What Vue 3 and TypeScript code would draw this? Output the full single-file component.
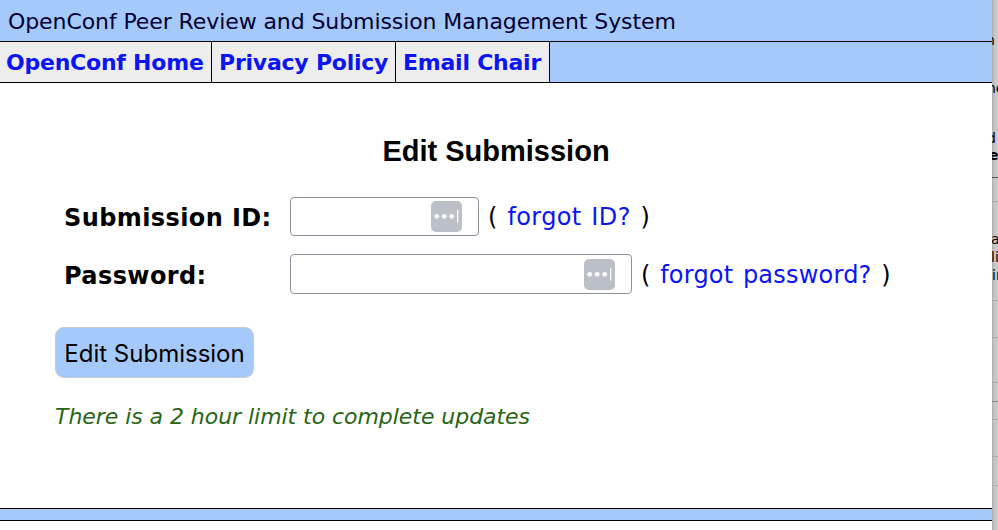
<script setup lang="ts">
interface Field {
  id: string
  label: string
  type: string
  link: string
  size: string
}

const navItems: string[] = ['OpenConf Home', 'Privacy Policy', 'Email Chair']

const fields: Field[] = [
  { id: 'pid', label: 'Submission ID:', type: 'text', link: 'forgot ID?', size: 'short' },
  { id: 'pwd', label: 'Password:', type: 'password', link: 'forgot password?', size: 'long' },
]

const edgeTexts = [
  { text: 'n', top: 31, left: -6, bold: false },
  { text: 'ne', top: 79, left: -5, bold: false },
  { text: 'd', top: 129, left: -5, bold: false },
  { text: 'e', top: 146, left: -3, bold: true },
  { text: 'a', top: 230, left: -1, bold: false },
  { text: 'li', top: 248, left: -1, bold: false },
  { text: 'in', top: 266, left: 0, bold: false },
]

const edgeLines = [
  { top: 177, color: '#555' },
  { top: 201, color: '#aaa' },
  { top: 300, color: '#aaa' },
  { top: 337, color: '#aaa' },
  { top: 382, color: '#aaa' },
  { top: 401, color: '#888' },
  { top: 419, color: '#aaa' },
  { top: 456, color: '#aaa' },
  { top: 485, color: '#aaa' },
]
</script>

<template>
  <div class="screen">
    <div class="window">
      <header class="banner"><span>OpenConf Peer Review and Submission Management System</span></header>
      <nav class="menu">
        <a v-for="(item, i) in navItems" :key="item" href="#" :class="'item' + i"><span>{{ item }}</span></a>
      </nav>
      <main class="content">
        <h1>Edit Submission</h1>
        <form @submit.prevent>
          <div v-for="f in fields" :key="f.id" class="row" :class="f.size">
            <label :for="f.id">{{ f.label }}</label>
            <div class="box">
              <input :id="f.id" :type="f.type" />
              <svg class="key" width="31" height="31" viewBox="0 0 31 31">
                <rect width="31" height="31" rx="5" fill="#babfc8" />
                <g fill="#fff">
                  <circle cx="5.7" cy="15.3" r="2.4" />
                  <circle cx="13.2" cy="15.3" r="2.4" />
                  <circle cx="20.7" cy="15.3" r="2.4" />
                  <rect x="26" y="9" width="1.3" height="12.5" />
                </g>
              </svg>
            </div>
            <span class="hint">( <a href="#">{{ f.link }}</a> )</span>
          </div>
          <button type="submit">Edit Submission</button>
          <p class="note">There is a 2 hour limit to complete updates</p>
        </form>
      </main>
      <footer class="foot"></footer>
    </div>
    <aside class="behind">
      <span
        v-for="t in edgeTexts"
        :key="t.top"
        :class="{ bold: t.bold }"
        :style="{ top: t.top + 'px', left: t.left + 'px' }"
      >{{ t.text }}</span>
      <i v-for="l in edgeLines" :key="l.top" :style="{ top: l.top + 'px', background: l.color }"></i>
    </aside>
  </div>
</template>

<style>
body {
  margin: 0;
  overflow: hidden;
}
</style>

<style scoped>
.screen {
  display: flex;
  width: 998px;
  height: 530px;
  overflow: hidden;
  font-family: Verdana, "DejaVu Sans", sans-serif;
  color: #000;
  white-space: nowrap;
}
.window {
  display: flex;
  flex-direction: column;
  width: 992px;
  background: #fff;
}
a {
  color: #0a14f5;
  text-decoration: none;
}
.banner {
  box-sizing: border-box;
  height: 42px;
  padding-left: 8px;
  border-bottom: 1px solid #000;
  background: #a5c9fa;
  color: #000033;
  font-size: 22px;
  letter-spacing: -0.09px;
  line-height: 43px;
}
.menu {
  display: flex;
  box-sizing: border-box;
  height: 41px;
  border-bottom: 1px solid #000;
  background: #a5c9fa;
  font-size: 22px;
  font-weight: bold;
  letter-spacing: -0.23px;
  line-height: 41px;
}
.menu a {
  box-sizing: border-box;
  height: 40px;
  padding-left: 7px;
  border-right: 1px solid #000;
  background: #ededed;
}
.menu .item0 {
  width: 212px;
  padding-left: 6px;
}
.item1 {
  width: 184px;
}
.item2 {
  width: 154px;
}
.content {
  flex: 1;
}
h1 {
  margin: 50px 0 27px;
  font: bold 29px/37px "Liberation Sans", Arial, sans-serif;
  text-align: center;
}
form {
  padding-left: 55px;
}
.row {
  display: flex;
  align-items: center;
  height: 39px;
  margin-bottom: 18px;
  font-size: 24px;
}
.row.long {
  height: 40px;
  margin-bottom: 33px;
}
label {
  width: 226px;
  padding: 2px 0 0 9px;
  font-weight: bold;
  letter-spacing: 0.4px;
}
.long label {
  padding-top: 3px;
}
.box {
  position: relative;
  width: 189px;
  height: 100%;
}
.long .box {
  width: 342px;
}
input {
  box-sizing: border-box;
  display: block;
  width: 100%;
  height: 100%;
  border: 1px solid #8f8f9d;
  border-radius: 4px;
  background: #fff;
}
.key {
  position: absolute;
  top: 4px;
  right: 17.5px;
}
.long .key {
  top: 5px;
}
.hint {
  margin-left: 9px;
  letter-spacing: 0.38px;
  word-spacing: 1.7px;
}
.long .hint {
  padding-top: 2px;
  letter-spacing: 0.22px;
}
button {
  display: block;
  width: 199px;
  height: 51px;
  padding: 2px 0 0;
  border: 1px solid #c8ccd2;
  border-radius: 9px;
  background: #a5c9fa;
  color: #000;
  font: 24px Inter, sans-serif;
}
.note {
  margin: 24px 0 0;
  color: #286414;
  font-size: 22px;
  font-style: italic;
  letter-spacing: -0.05px;
  line-height: 30px;
}
.foot {
  height: 11px;
  margin-bottom: 9px;
  border-top: 1px solid #000;
  border-bottom: 1px solid #000;
  background: #a5c9fa;
}
.behind {
  position: relative;
  width: 6px;
  overflow: hidden;
  background: linear-gradient(to right, #aaa, #c4c4c4 2px, #cdcdcd);
  font: 14px/18px "DejaVu Sans", sans-serif;
}
.behind span {
  position: absolute;
}
.behind .bold {
  font-weight: bold;
}
.behind i {
  position: absolute;
  left: 0;
  width: 6px;
  height: 1px;
}
</style>
